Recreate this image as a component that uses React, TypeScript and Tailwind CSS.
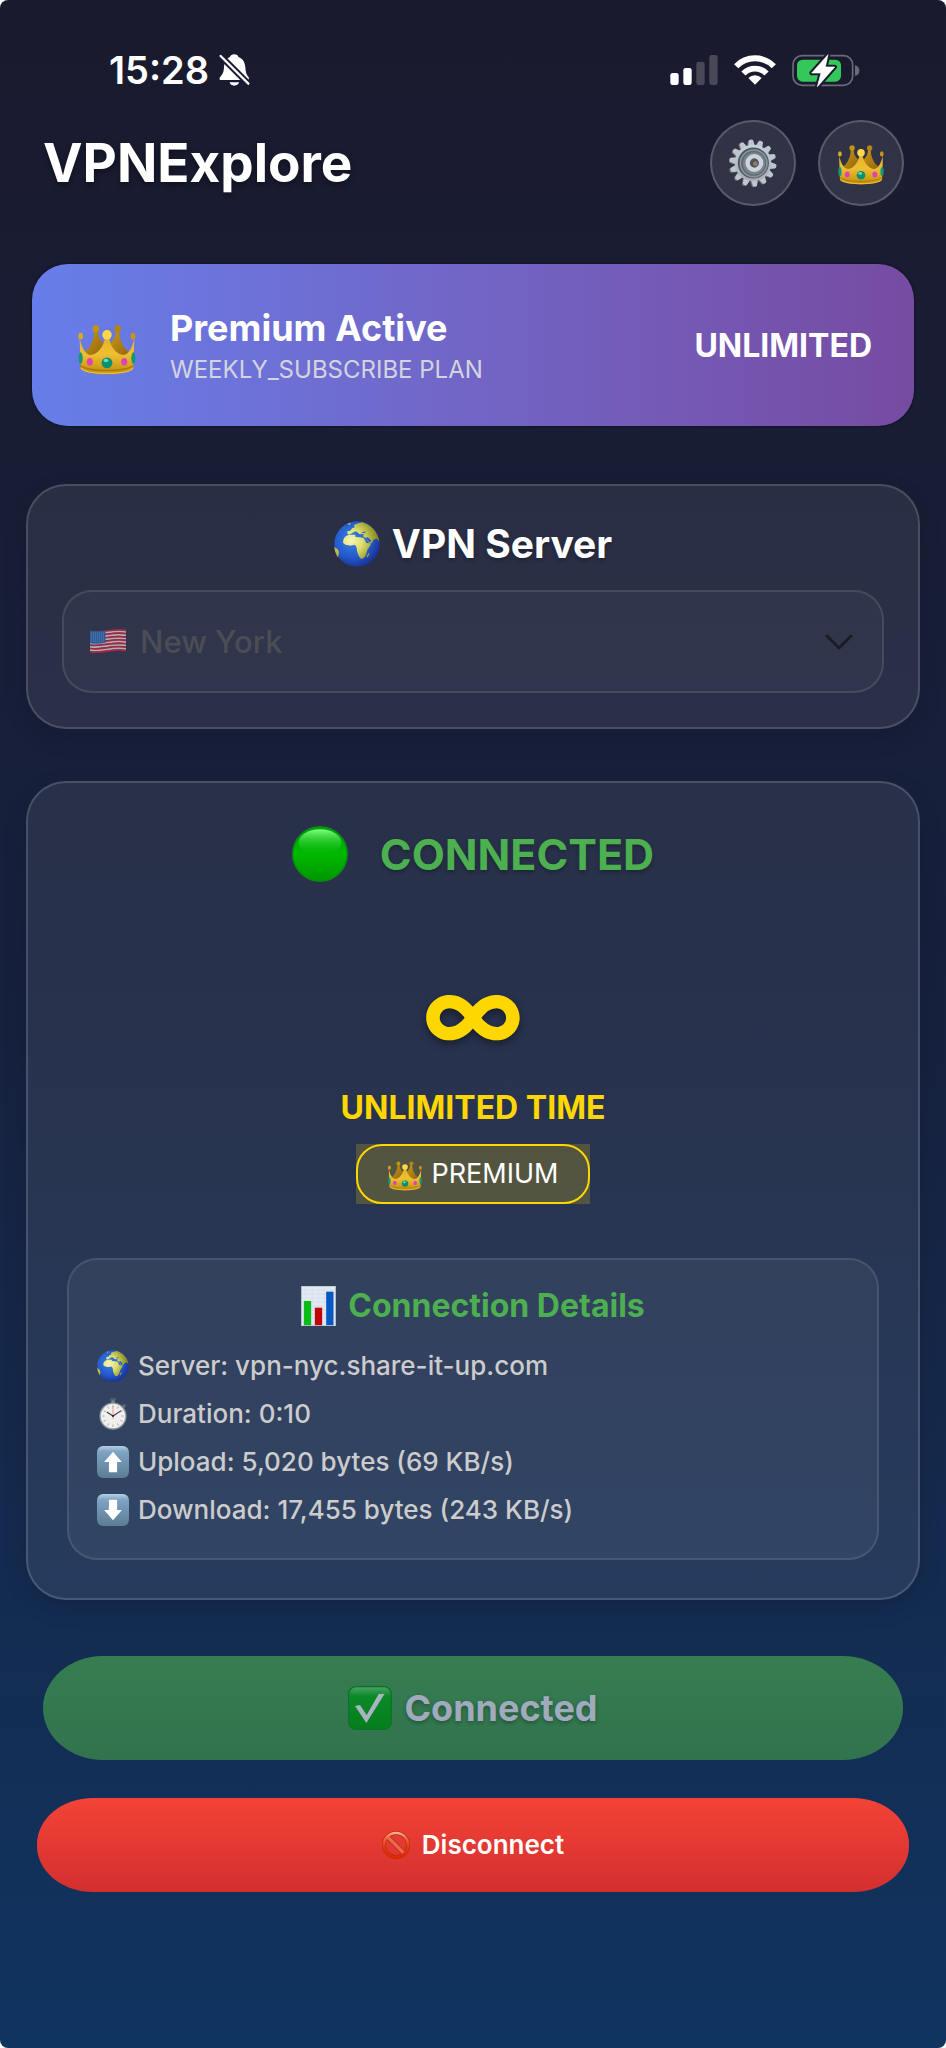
import { useState } from 'react';

type IconProps = { className?: string };

const gearTeeth = [0, 1, 2, 3, 4, 5, 6, 7, 8, 9, 10, 11, 12, 13];
const flagStripes = [0, 1, 2, 3, 4, 5, 6, 7, 8, 9, 10, 11, 12];
const watchTicks = [0, 1, 2, 3, 4, 5, 6, 7, 8, 9, 10, 11];

// shared gradients, so each icon can be used more than once on the page
const Gradients = () => (
    <svg className="absolute w-0 h-0" aria-hidden="true">
        <defs>
            <linearGradient id="gold" x1="0" y1="0" x2="0" y2="1">
                <stop offset="0" stopColor="#e4b428" />
                <stop offset="0.45" stopColor="#eebf34" />
                <stop offset="1" stopColor="#c08c0c" />
            </linearGradient>
            <linearGradient id="goldBack" x1="0" y1="0" x2="1" y2="1">
                <stop offset="0" stopColor="#c99a12" />
                <stop offset="1" stopColor="#8f6010" />
            </linearGradient>
            <linearGradient id="steel" gradientUnits="userSpaceOnUse" x1="0" y1="0" x2="0" y2="142">
                <stop offset="0" stopColor="#c9d6e0" />
                <stop offset="1" stopColor="#a4a6b0" />
            </linearGradient>
            <radialGradient id="ocean" cx="0.4" cy="0.4" r="0.62">
                <stop offset="0" stopColor="#3a84e0" />
                <stop offset="0.65" stopColor="#2458cc" />
                <stop offset="1" stopColor="#1a3498" />
            </radialGradient>
            <radialGradient id="land" gradientUnits="userSpaceOnUse" cx="50" cy="58" r="84">
                <stop offset="0" stopColor="#f8f6b4" />
                <stop offset="0.4" stopColor="#dfdf70" />
                <stop offset="1" stopColor="#7c8210" />
            </radialGradient>
            <linearGradient id="ball" x1="0" y1="0" x2="0" y2="1">
                <stop offset="0" stopColor="#00a010" />
                <stop offset="0.5" stopColor="#00b800" />
                <stop offset="1" stopColor="#009400" />
            </linearGradient>
            <linearGradient id="ballShine" x1="0" y1="0" x2="0" y2="1">
                <stop offset="0" stopColor="#7dff7d" />
                <stop offset="1" stopColor="#00b800" stopOpacity="0" />
            </linearGradient>
            <linearGradient id="keycap" x1="0" y1="0" x2="0" y2="1">
                <stop offset="0" stopColor="#b4cfe4" />
                <stop offset="0.18" stopColor="#7fa3c4" />
                <stop offset="1" stopColor="#5c7c94" />
            </linearGradient>
            <linearGradient id="checkBox" x1="0" y1="0" x2="0" y2="1">
                <stop offset="0" stopColor="#4fa068" />
                <stop offset="0.22" stopColor="#0b8a28" />
                <stop offset="1" stopColor="#067d1c" />
            </linearGradient>
            <linearGradient id="stopRing" gradientUnits="userSpaceOnUse" x1="0" y1="0" x2="0" y2="86">
                <stop offset="0" stopColor="#ffc4b0" />
                <stop offset="0.25" stopColor="#ee6a44" />
                <stop offset="0.6" stopColor="#dd3a14" />
                <stop offset="1" stopColor="#e02400" />
            </linearGradient>
        </defs>
    </svg>
);

const CrownIcon = ({ className }: IconProps) => (
    <svg className={className} viewBox="0 0 170 148" aria-hidden="true">
        <path d="M47 18C47 50 30 76 14 82L34 100C56 100 72 80 78 56C63 45 58 32 58 18Z" fill="url(#goldBack)" />
        <path d="M121 18C121 50 138 76 156 82L136 100C114 100 98 80 92 56C106 45 111 32 111 18Z" fill="url(#goldBack)" />
        <circle cx="52" cy="11" r="10" fill="#c4940f" />
        <circle cx="117" cy="11" r="10" fill="#b5850f" />
        <path d="M4 40C10 64 20 88 36 89C58 88 76 62 79 38H91C94 62 112 88 134 89C150 88 160 64 166 40L163 128C152 152 18 152 7 128Z" fill="url(#gold)" />
        <path d="M6 118C22 140 148 140 164 118" fill="none" stroke="#a87808" strokeWidth="3" />
        <path d="M8 128C24 148 146 148 162 128" fill="none" stroke="#f4cf4c" strokeWidth="3" />
        <ellipse cx="7" cy="33" rx="7" ry="10" fill="#dba820" />
        <ellipse cx="162" cy="33" rx="7" ry="10" fill="#c8951a" />
        <circle cx="85" cy="29" r="14" fill="#ffd84a" />
        <ellipse cx="7" cy="98" rx="6" ry="17" fill="#109a74" />
        <ellipse cx="163" cy="98" rx="6" ry="17" fill="#109a74" />
        <ellipse cx="34" cy="109" rx="9" ry="11" fill="#e043b0" />
        <ellipse cx="136" cy="109" rx="9" ry="11" fill="#e043b0" />
        <circle cx="85" cy="112" r="16" fill="#08916c" />
        <ellipse cx="82" cy="105" rx="7" ry="5" fill="#6fd8b8" />
    </svg>
);

const GearIcon = ({ className }: IconProps) => (
    <svg className={className} viewBox="0 0 142 142" aria-hidden="true">
        {gearTeeth.map(i => (
            <path key={i} d="M61 20L65 3Q71 -1 77 3L81 20Z" fill="#7d7468" transform={`translate(-3 2) rotate(${(i * 360) / 14 - 5} 71 71)`} />
        ))}
        {gearTeeth.map(i => (
            <path key={i} d="M61 20L65 3Q71 -1 77 3L81 20Z" fill="#bcc6d0" transform={`rotate(${(i * 360) / 14 - 5} 71 71)`} />
        ))}
        <circle cx="71" cy="71" r="54" fill="url(#steel)" />
        <circle cx="72" cy="71" r="46" fill="#4e565c" />
        <circle cx="73" cy="72" r="42" fill="#89939a" />
        <circle cx="73" cy="72" r="37" fill="#5f696f" />
        <circle cx="74" cy="72" r="33" fill="#798389" />
        <circle cx="75" cy="71" r="20" fill="none" stroke="#cbd4de" strokeWidth="13" />
        <circle cx="75" cy="71" r="13" fill="#55504e" />
        <circle cx="78" cy="73" r="7" fill="#8b7d70" />
    </svg>
);

const GlobeIcon = ({ className }: IconProps) => (
    <svg className={className} viewBox="0 0 136 136" aria-hidden="true">
        <circle cx="68" cy="68" r="67" fill="url(#ocean)" />
        <g fill="url(#land)">
            <path d="M27 60C28 50 36 42 46 41L62 41L64 47L76 48L88 50L96 65L110 66C108 76 99 82 97 90C96 101 90 109 82 112C73 108 71 98 68 89C68 80 67 73 60 70C48 74 38 73 32 69C27 66 26 63 27 60Z" />
            <path d="M40 38L39 30L48 29L54 21L61 19L59 12L72 7L84 4C110 12 130 32 134 62L126 52L116 56L113 64L104 66L94 50L86 46L88 40L80 37L76 42L70 34L64 30L58 33L50 38L44 41Z" />
            <path d="M1 77L9 82C16 88 15 96 12 108C5 98 2 90 1 77Z" />
            <path d="M103 94L105 98L99 108L96 104Z" />
        </g>
        <path d="M66 33L78 41L74 43L68 38ZM80 33L94 31L90 36ZM94 50L106 64L110 58L100 48Z" fill="#2458cc" />
        <path d="M40 8L50 6L46 12Z" fill="#c6d472" />
    </svg>
);

const FlagIcon = ({ className }: IconProps) => (
    <svg className={className} viewBox="0 0 107 74" aria-hidden="true">
        {flagStripes.map(i => (
            <path
                key={i}
                d={`M0 ${8 + i * 5}C34 ${14 + i * 5} 66 ${-3 + i * 5} 107 ${4 + i * 5}`}
                fill="none"
                stroke={i % 2 === 0 ? '#a3283f' : '#b3adb8'}
                strokeWidth="5.4"
            />
        ))}
        <path d="M0 5C18 8 32 7 46 4V41C32 44 18 45 0 42Z" fill="#2d5d98" />
        <path d="M3 12H44M3 18H44M3 24H44M3 30H44M3 36H44" stroke="#8ea8c8" strokeWidth="2" strokeDasharray="2 4" />
    </svg>
);

const GreenBallIcon = ({ className }: IconProps) => (
    <svg className={className} viewBox="0 0 168 168" aria-hidden="true">
        <circle cx="84" cy="84" r="82" fill="url(#ball)" stroke="#068a14" strokeWidth="4" />
        <ellipse cx="84" cy="50" rx="64" ry="40" fill="url(#ballShine)" />
    </svg>
);

const ChartIcon = ({ className }: IconProps) => (
    <svg className={className} viewBox="0 0 104 120" aria-hidden="true">
        <path d="M0 0H104V120H0Z" fill="#e3eaf2" />
        <path d="M0 12H104M0 24H104M0 36H104M0 48H104M0 60H104M0 72H104M0 84H104M0 96H104M0 108H104M12 0V120M35 0V120M52 0V120M69 0V120M86 0V120" stroke="#c3d4e6" strokeWidth="1" />
        <path d="M8 45H30V118H8Z" fill="#08bd18" />
        <path d="M41 65H63V118H41Z" fill="#c00408" />
        <path d="M75 17H97V118H75Z" fill="#0a58c4" />
        <path d="M1 1H103V119H1Z" fill="none" stroke="#a9b4c2" strokeWidth="2" />
    </svg>
);

const StopwatchIcon = ({ className }: IconProps) => (
    <svg className={className} viewBox="0 0 94 94" aria-hidden="true">
        <rect x="38" y="0" width="18" height="8" rx="3" fill="#4f5f6a" />
        <rect x="42" y="7" width="10" height="10" fill="#76868f" />
        <path d="M72 24L80 17L86 23L79 31Z" fill="#5b6b76" />
        <circle cx="47" cy="53" r="40" fill="#8d969c" />
        <circle cx="47" cy="53" r="36" fill="#f1f0ee" />
        {watchTicks.map(i => (
            <path key={i} d="M47 21V28" stroke="#8a8a8a" strokeWidth="2" transform={`rotate(${i * 30} 47 53)`} />
        ))}
        <path d="M47 62V23" stroke="#e8a098" strokeWidth="3" />
        <path d="M47 53L30 42M47 53L70 38" stroke="#333" strokeWidth="3" strokeLinecap="round" />
        <circle cx="47" cy="53" r="3" fill="#222" />
    </svg>
);

const ArrowBoxIcon = ({ className, down }: IconProps & { down?: boolean }) => (
    <svg className={className} viewBox="0 0 94 94" aria-hidden="true">
        <rect width="94" height="94" rx="18" fill="url(#keycap)" />
        <path d={down ? 'M47 77L73 47H59V17H35V47H21Z' : 'M47 17L73 47H59V77H35V47H21Z'} fill="#fff" />
    </svg>
);

const CheckIcon = ({ className }: IconProps) => (
    <svg className={className} viewBox="0 0 132 132" aria-hidden="true">
        <rect x="2" y="2" width="128" height="128" rx="22" fill="url(#checkBox)" stroke="#0a7428" strokeWidth="4" />
        <path d="M21 60L36 57L56 87L92 24L110 23L55 111Z" fill="#a9b3c1" />
    </svg>
);

const ProhibitedIcon = ({ className }: IconProps) => (
    <svg className={className} viewBox="0 0 86 86" aria-hidden="true">
        <circle cx="43" cy="43" r="37" fill="none" stroke="#c02808" strokeWidth="12" />
        <path d="M18 19L67 68" stroke="#b8301c" strokeWidth="15" />
        <path d="M18 19L67 68" stroke="#ee6a4c" strokeWidth="10" />
        <circle cx="43" cy="43" r="37" fill="none" stroke="url(#stopRing)" strokeWidth="8" />
    </svg>
);

const SilentIcon = ({ className }: IconProps) => (
    <svg className={className} viewBox="0 0 92 97" aria-hidden="true">
        <path d="M45 1C52 1 57 4 58 9C72 14 78 26 79 42C80 58 83 63 88 69C91 74 90 79 86 79H5C0 79 -1 74 3 69C9 63 13 57 14 42C15 26 20 14 32 9C34 4 39 1 45 1Z" fill="#fff" />
        <path d="M31 86H60C58 93 52 96 45 96S33 93 31 86Z" fill="#fff" />
        <path d="M-2 0L94 96" stroke="#1a1a2e" strokeWidth="19" />
        <path d="M4 6L88 90" stroke="#fff" strokeWidth="7" strokeLinecap="round" />
    </svg>
);

const SignalIcon = ({ className }: IconProps) => (
    <svg className={className} viewBox="0 0 142 90" aria-hidden="true">
        <rect x="0" y="54" width="25" height="36" rx="7" fill="#fff" />
        <rect x="39" y="39" width="25" height="51" rx="7" fill="#fff" />
        <rect x="78" y="20" width="25" height="70" rx="7" fill="#484857" />
        <rect x="117" y="0" width="25" height="90" rx="7" fill="#484857" />
    </svg>
);

const WifiIcon = ({ className }: IconProps) => (
    <svg className={className} viewBox="0 0 126 91" aria-hidden="true">
        <path d="M6 34A80 80 0 0 1 120 34" fill="none" stroke="#fff" strokeWidth="18" />
        <path d="M28 56A49 49 0 0 1 98 56" fill="none" stroke="#fff" strokeWidth="18" />
        <path d="M63 90L43 70A28 28 0 0 1 83 70Z" fill="#fff" />
    </svg>
);

const BatteryIcon = ({ className }: IconProps) => (
    <svg className={className} viewBox="0 0 204 99" aria-hidden="true">
        <rect x="3" y="5" width="179" height="89" rx="27" fill="none" stroke="#6a6a78" strokeWidth="5" />
        <path d="M189 34C198 36 202 42 202 50S198 64 189 66Z" fill="#6a6a78" />
        <rect x="15" y="17" width="132" height="66" rx="17" fill="#34c759" />
        <path d="M108 2L59 57H87L76 98L128 39H100Z" fill="#fff" stroke="#1a1a2e" strokeWidth="14" strokeLinejoin="round" />
        <path d="M108 2L59 57H87L76 98L128 39H100Z" fill="#fff" stroke="#fff" strokeWidth="2" strokeLinejoin="round" />
    </svg>
);

const ChevronIcon = ({ className }: IconProps) => (
    <svg className={className} viewBox="0 0 28 16" aria-hidden="true">
        <path d="M2 2L14 14L26 2" fill="none" stroke="#1a1c24" strokeWidth="3" strokeLinecap="round" strokeLinejoin="round" />
    </svg>
);

const StatusBar = () => (
    <div className="flex items-center justify-between h-[108px] pt-8 pl-[109px] pr-[86px]">
        <div className="flex items-center gap-[10px]">
            <span className="text-[38px] font-semibold">15:28</span>
            <SilentIcon className="w-[31px] h-8" />
        </div>
        <div className="flex items-center gap-4">
            <SignalIcon className="w-12 h-[30px]" />
            <WifiIcon className="w-[42px] h-[30px]" />
            <BatteryIcon className="w-[68px] h-[33px]" />
        </div>
    </div>
);

const Header = () => (
    <header className="flex items-center justify-between pt-3 pl-[43px] pr-[42px]">
        <h1 className="text-[53px] leading-[64px] font-bold [text-shadow:0_3px_6px_rgba(0,0,0,0.4)]">VPNExplore</h1>
        <div className="flex gap-[22px]">
            <button type="button" aria-label="Settings" className="flex items-center justify-center size-[86px] rounded-full border-2 border-white/20 bg-white/10">
                <GearIcon className="size-12" />
            </button>
            <button type="button" aria-label="Premium" className="flex items-center justify-center size-[86px] rounded-full border-2 border-white/20 bg-white/10">
                <CrownIcon className="w-[46px] h-11 pt-1" />
            </button>
        </div>
    </header>
);

const PremiumBanner = () => (
    <section className="flex items-center mt-[58px] mx-8 pl-[46px] pr-[42px] pt-[42px] pb-10 rounded-[36px] bg-linear-to-r from-[#667eea] to-[#764ba2] shadow-[0_0_3px_rgba(0,0,0,0.6)]">
        <CrownIcon className="w-[58px] h-[58px] pt-2" />
        <div className="flex-1 ml-[34px]">
            <h2 className="text-[36px] leading-11 font-bold">Premium Active</h2>
            <p className="mt-1 text-[24px] leading-8 text-[#d4d4e0]">WEEKLY_SUBSCRIBE PLAN</p>
        </div>
        <span className="text-[32px] leading-10 font-bold">UNLIMITED</span>
    </section>
);

const ServerCard = () => {
    const [server, setServer] = useState('nyc');
    return (
        <section className="mt-[58px] mx-[26px] px-[34px] pt-[34px] pb-[34px] rounded-[40px] border-2 border-white/15 bg-white/[0.08] shadow-[0_8px_24px_rgba(0,0,0,0.12)]">
            <label htmlFor="server" className="flex items-center justify-center gap-3 text-[39px] leading-12 font-bold [text-shadow:0_2px_4px_rgba(0,0,0,0.3)]">
                <GlobeIcon className="size-[46px]" />
                VPN Server
            </label>
            <div className="flex items-center h-[103px] mt-[22px] px-[26px] rounded-[30px] border-2 border-white/10 bg-white/[0.03]">
                <FlagIcon className="w-9 h-[25px]" />
                <select id="server" disabled value={server} onChange={e => setServer(e.target.value)} className="flex-1 ml-[14px] appearance-none bg-transparent text-[31px] leading-10 font-medium text-[#4b4d55] opacity-100">
                    <option value="nyc">New York</option>
                </select>
                <ChevronIcon className="w-7 h-4 mr-[3px]" />
            </div>
        </section>
    );
};

const ConnectionDetails = () => (
    <div className="mt-[54px] px-7 pt-[22px] pb-6 rounded-[30px] border-2 border-white/10 bg-white/5">
        <h3 className="flex items-center justify-center gap-3 text-[32px] leading-12 font-bold text-[#4caf50]">
            <ChartIcon className="w-[35px] h-10" />
            Connection Details
        </h3>
        <ul className="mt-3 text-[26px] leading-12 font-medium text-[#cccccc]">
            <li className="flex items-center gap-[9px]">
                <GlobeIcon className="size-8" />
                Server: vpn-nyc.share-it-up.com
            </li>
            <li className="flex items-center gap-[9px]">
                <StopwatchIcon className="size-8" />
                Duration: 0:10
            </li>
            <li className="flex items-center gap-[9px]">
                <ArrowBoxIcon className="size-8" />
                Upload: 5,020 bytes (69 KB/s)
            </li>
            <li className="flex items-center gap-[9px]">
                <ArrowBoxIcon down className="size-8" />
                Download: 17,455 bytes (243 KB/s)
            </li>
        </ul>
    </div>
);

const StatusCard = () => (
    <section className="mt-[52px] mx-[26px] px-[39px] pt-[43px] pb-[38px] rounded-[40px] border-2 border-white/15 bg-white/[0.08] shadow-[0_8px_24px_rgba(0,0,0,0.12)]">
        <div className="flex items-center justify-center gap-8">
            <GreenBallIcon className="size-14" />
            <span className="text-[43px] leading-14 font-bold text-[#4caf50] [text-shadow:0_2px_4px_rgba(0,0,0,0.3)]">CONNECTED</span>
        </div>
        <div className="flex flex-col items-center mt-[82px]">
            <span className="text-[104px] leading-24 font-bold text-[#ffd700] [text-shadow:0_4px_8px_rgba(0,0,0,0.4)]">∞</span>
            <span className="mt-7 text-[32px] leading-10 font-bold text-[#ffd700]">UNLIMITED TIME</span>
            <div className="mt-4 bg-[#ffd700]/20">
                <div className="flex items-center gap-[10px] h-15 px-[30px] rounded-[26px] border-2 border-[#ffd700] text-[27px]">
                    <CrownIcon className="w-[34px] h-[34px] pt-1" />
                    PREMIUM
                </div>
            </div>
        </div>
        <ConnectionDetails />
    </section>
);

const App = () => (
    <div className="bg-white font-['Inter','Liberation_Sans',sans-serif]">
        <Gradients />
        <main className="flex flex-col min-h-screen rounded-lg bg-linear-to-b from-[#1a1a2e] via-[#16213e] to-[#0f3460] text-white">
            <StatusBar />
            <Header />
            <PremiumBanner />
            <ServerCard />
            <StatusCard />
            <button type="button" disabled className="flex items-center justify-center gap-3 mt-14 mx-[43px] py-7 rounded-[60px/52px] bg-linear-to-b from-[#367d50] to-[#31734e] text-[36px] leading-12 font-bold text-[#9fabbd] [text-shadow:0_2px_4px_rgba(0,0,0,0.3)]">
                <CheckIcon className="size-11" />
                Connected
            </button>
            <button type="button" className="flex items-center justify-center gap-3 mt-[38px] mx-[37px] mb-12 py-7 rounded-[56px/46px] bg-linear-to-b from-[#f44336] to-[#d32f2f] text-[26px] leading-[38px] font-semibold">
                <ProhibitedIcon className="size-7" />
                Disconnect
            </button>
        </main>
    </div>
);

export default App;
